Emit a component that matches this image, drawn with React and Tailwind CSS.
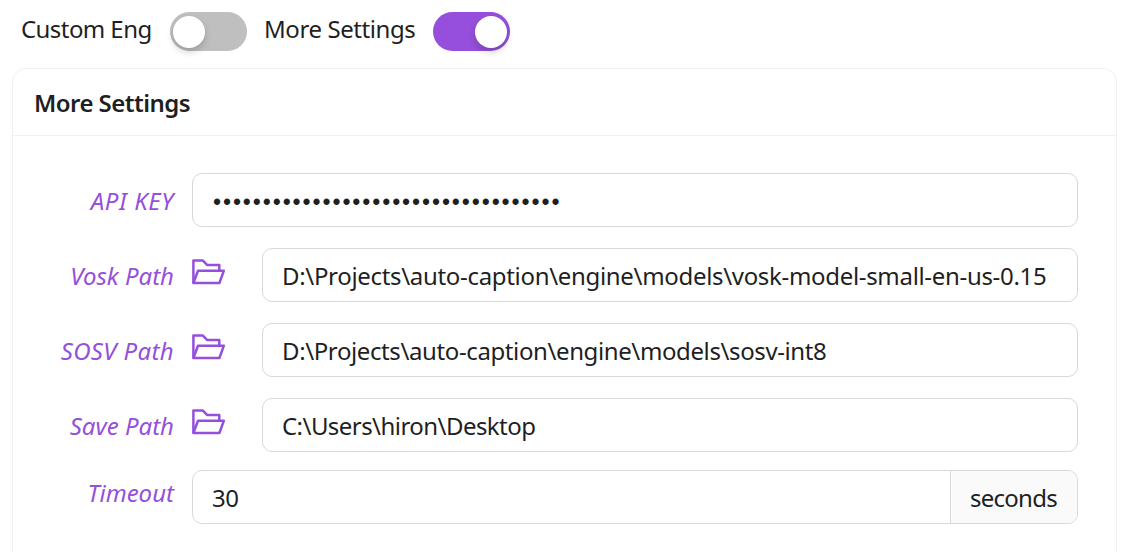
const FolderOpen = () => (
  <svg className="mt-[11px] h-[26px] w-[34px] shrink-0" viewBox="0 0 34 26" fill="none" stroke="#954fdc" strokeWidth="2.5" strokeLinejoin="round">
    <path d="M1.4 24V1.6h9.5l4.4 4.5h12v4.8" />
    <path d="M1.4 24L6 11.8h25.8L27.4 24H1.4z" />
  </svg>
);

const Label = ({ text, className }) => (
  <div className="flex w-[180px] shrink-0 justify-end pr-[18px] text-[#954fdc] italic">
    <span className={`whitespace-nowrap leading-[56px] ${className}`}>{text}</span>
  </div>
);

const inputBox = "h-[54px] min-w-0 flex-1 rounded-[10px] border border-[#d9d9d9] bg-white whitespace-nowrap";

const PathRow = ({ label, labelClass, value, valueClass }) => (
  <div className="mb-[21px] flex h-[54px]">
    <Label text={label} className={labelClass} />
    <FolderOpen />
    <div className={`ml-[36px] pl-[19px] leading-[54px] ${inputBox}`}>
      <span className={valueClass}>{value}</span>
    </div>
  </div>
);

const Switch = ({ on }) => (
  <div
    className={`mt-3 flex h-[39px] w-[77px] shrink-0 items-center rounded-full px-[3px] ${on ? "justify-end bg-[#954fdc]" : "justify-start bg-[#bfbfbf]"}`}
  >
    <div className="h-[32px] w-[32px] rounded-full bg-white shadow-[0_4px_7px_rgba(0,35,11,0.2)]" />
  </div>
);

export default function App() {
  return (
    <div className="h-[552px] w-full overflow-hidden bg-white font-['Noto_Sans',sans-serif] text-[24px] text-[#1f1f1f]">
      <div className="flex h-[68px] pl-[21px]">
        <div className="w-[149px] leading-[58px] tracking-[-0.57px] whitespace-nowrap">Custom Eng</div>
        <Switch on={false} />
        <div className="ml-[17px] w-[169px] leading-[58px] tracking-[-0.42px] whitespace-nowrap">More Settings</div>
        <Switch on />
      </div>
      <div className="ml-[12px] h-[600px] w-[1105px] rounded-[14px] border border-[#f0f0f0]">
        <div className="h-[67px] border-b border-[#f0f0f0] pl-[21px] leading-[67px] font-semibold tracking-[-0.54px]">More Settings</div>
        <div className="-ml-px pt-[37px] pr-[38px]">
          <div className="mb-[21px] flex h-[54px]">
            <Label text="API KEY" className="tracking-[0.6px]" />
            <div className={`${inputBox} pl-[20px] font-['Liberation_Sans',sans-serif] text-[23px] leading-[56px] tracking-[1.9px]`}>{"•".repeat(35)}</div>
          </div>
          <PathRow label="Vosk Path" labelClass="tracking-normal" value={"D:\\Projects\\auto-caption\\engine\\models\\vosk-model-small-en-us-0.15"} valueClass="tracking-[-0.32px]" />
          <PathRow label="SOSV Path" labelClass="tracking-[0.35px]" value={"D:\\Projects\\auto-caption\\engine\\models\\sosv-int8"} valueClass="tracking-[-0.39px]" />
          <PathRow label="Save Path" labelClass="tracking-normal" value={"C:\\Users\\hiron\\Desktop"} valueClass="tracking-[-0.55px]" />
          <div className="-mt-[3px] flex h-[54px]">
            <div className="-mt-[5px]"><Label text="Timeout" className="tracking-normal" /></div>
            <div className="flex h-[54px] flex-1 overflow-hidden rounded-[10px] border border-[#d9d9d9] leading-[54px]">
              <div className="flex-1 pl-[19px] tracking-[-0.5px]">30</div>
              <div className="w-[127px] border-l border-[#d9d9d9] bg-[#fafafa] pl-[19px] tracking-[-0.75px]">seconds</div>
            </div>
          </div>
        </div>
      </div>
    </div>
  );
}
